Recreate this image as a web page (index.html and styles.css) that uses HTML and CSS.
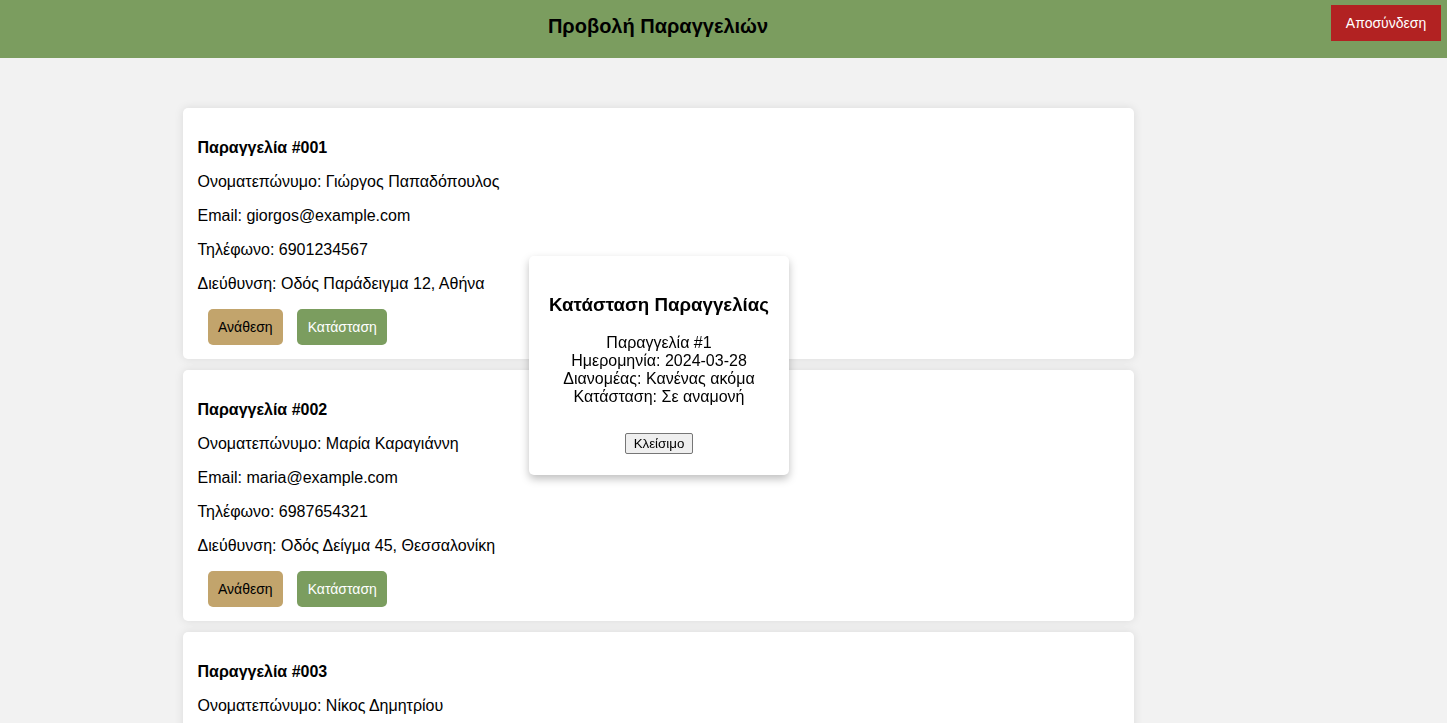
FILE: index.html
```html
<!DOCTYPE html>
<html lang="el">
<head>
<meta charset="utf-8">
<title>Προβολή Παραγγελιών</title>
<link rel="stylesheet" href="styles.css">
</head>
<body>
<header class="topbar">
  <h1 class="topbar-title">Προβολή Παραγγελιών</h1>
  <button class="logout-btn">Αποσύνδεση</button>
</header>
<div class="page">
  <main class="orders">
    <div class="order-card">
      <p class="order-title">Παραγγελία #001</p>
      <p>Ονοματεπώνυμο: Γιώργος Παπαδόπουλος</p>
      <p>Email: giorgos@example.com</p>
      <p>Τηλέφωνο: 6901234567</p>
      <p>Διεύθυνση: Οδός Παράδειγμα 12, Αθήνα</p>
      <div class="actions"><button class="btn btn-assign">Ανάθεση</button><button class="btn btn-status">Κατάσταση</button></div>
    </div>
    <div class="order-card">
      <p class="order-title">Παραγγελία #002</p>
      <p>Ονοματεπώνυμο: Μαρία Καραγιάννη</p>
      <p>Email: maria@example.com</p>
      <p>Τηλέφωνο: 6987654321</p>
      <p>Διεύθυνση: Οδός Δείγμα 45, Θεσσαλονίκη</p>
      <div class="actions"><button class="btn btn-assign">Ανάθεση</button><button class="btn btn-status">Κατάσταση</button></div>
    </div>
    <div class="order-card">
      <p class="order-title">Παραγγελία #003</p>
      <p>Ονοματεπώνυμο: Νίκος Δημητρίου</p>
      <p>Email: nikos@example.com</p>
      <p>Τηλέφωνο: 6945678123</p>
      <p>Διεύθυνση: Οδός Παράδειγμα 7, Πάτρα</p>
      <div class="actions"><button class="btn btn-assign">Ανάθεση</button><button class="btn btn-status">Κατάσταση</button></div>
    </div>
  </main>
</div>
<div class="modal">
  <h3 class="modal-title">Κατάσταση Παραγγελίας</h3>
  <p class="modal-text">Παραγγελία #1<br>Ημερομηνία: 2024-03-28<br>Διανομέας: Κανένας ακόμα<br>Κατάσταση: Σε αναμονή</p>
  <button class="close-btn">Κλείσιμο</button>
</div>
</body>
</html>
```

FILE: styles.css
```css
html, body {
  margin: 0;
  padding: 0;
}
body {
  background: #f2f2f2;
  font-family: "Liberation Sans", Arial, sans-serif;
  color: #000;
}
.topbar {
  display: flex;
  align-items: flex-start;
  height: 58px;
  background: #7b9d5f;
  padding-right: 6px;
}
.topbar-title {
  flex: 1;
  margin: 0 15px 0 0;
  text-align: center;
  font-size: 20px;
  line-height: 23px;
  padding-top: 15px;
  font-weight: bold;
}
.logout-btn {
  margin-top: 5px;
  width: 110px;
  height: 36px;
  padding: 0;
  border: none;
  background: #b22222;
  color: #fff;
  font-family: "Liberation Sans", Arial, sans-serif;
  font-size: 14px;
}
.page {
  width: 1316px;
}
.orders {
  width: 951px;
  margin: 50px auto 0;
}
.order-card {
  background: #fff;
  border-radius: 5px;
  box-shadow: 0 0 10px rgba(0,0,0,0.1);
  padding: 15px 15px 14px;
  margin-bottom: 11px;
  font-size: 16px;
  line-height: 18px;
}
.order-card p {
  margin: 16px 0;
}
.order-title {
  font-weight: bold;
}
.actions {
  display: flex;
  gap: 14px;
  padding-left: 10px;
}
.btn {
  height: 36px;
  padding: 0 10.5px;
  border: none;
  border-radius: 5px;
  font-family: "Liberation Sans", Arial, sans-serif;
  font-size: 14px;
}
.btn-assign {
  background: #c2a46c;
  color: #000;
}
.btn-status {
  background: #7b9d5f;
  color: #fff;
}
.modal {
  position: fixed;
  left: 529px;
  top: 256px;
  width: 220px;
  padding: 20px 20px 21px;
  background: #fff;
  border-radius: 5px;
  box-shadow: 0 4px 8px rgba(0,0,0,0.25);
  text-align: center;
}
.modal-title {
  font-size: 18.72px;
  margin: 18px 0;
  line-height: 22px;
}
.modal-text {
  font-size: 16px;
  line-height: 18px;
  margin: 0 0 27px;
}
.close-btn {
  font-family: "Liberation Sans", Arial, sans-serif;
  font-size: 13.33px;
  padding: 2px 8px;
  border: 1px solid #767676;
  border-radius: 2px;
  background: #efefef;
  color: #000;
}
```
